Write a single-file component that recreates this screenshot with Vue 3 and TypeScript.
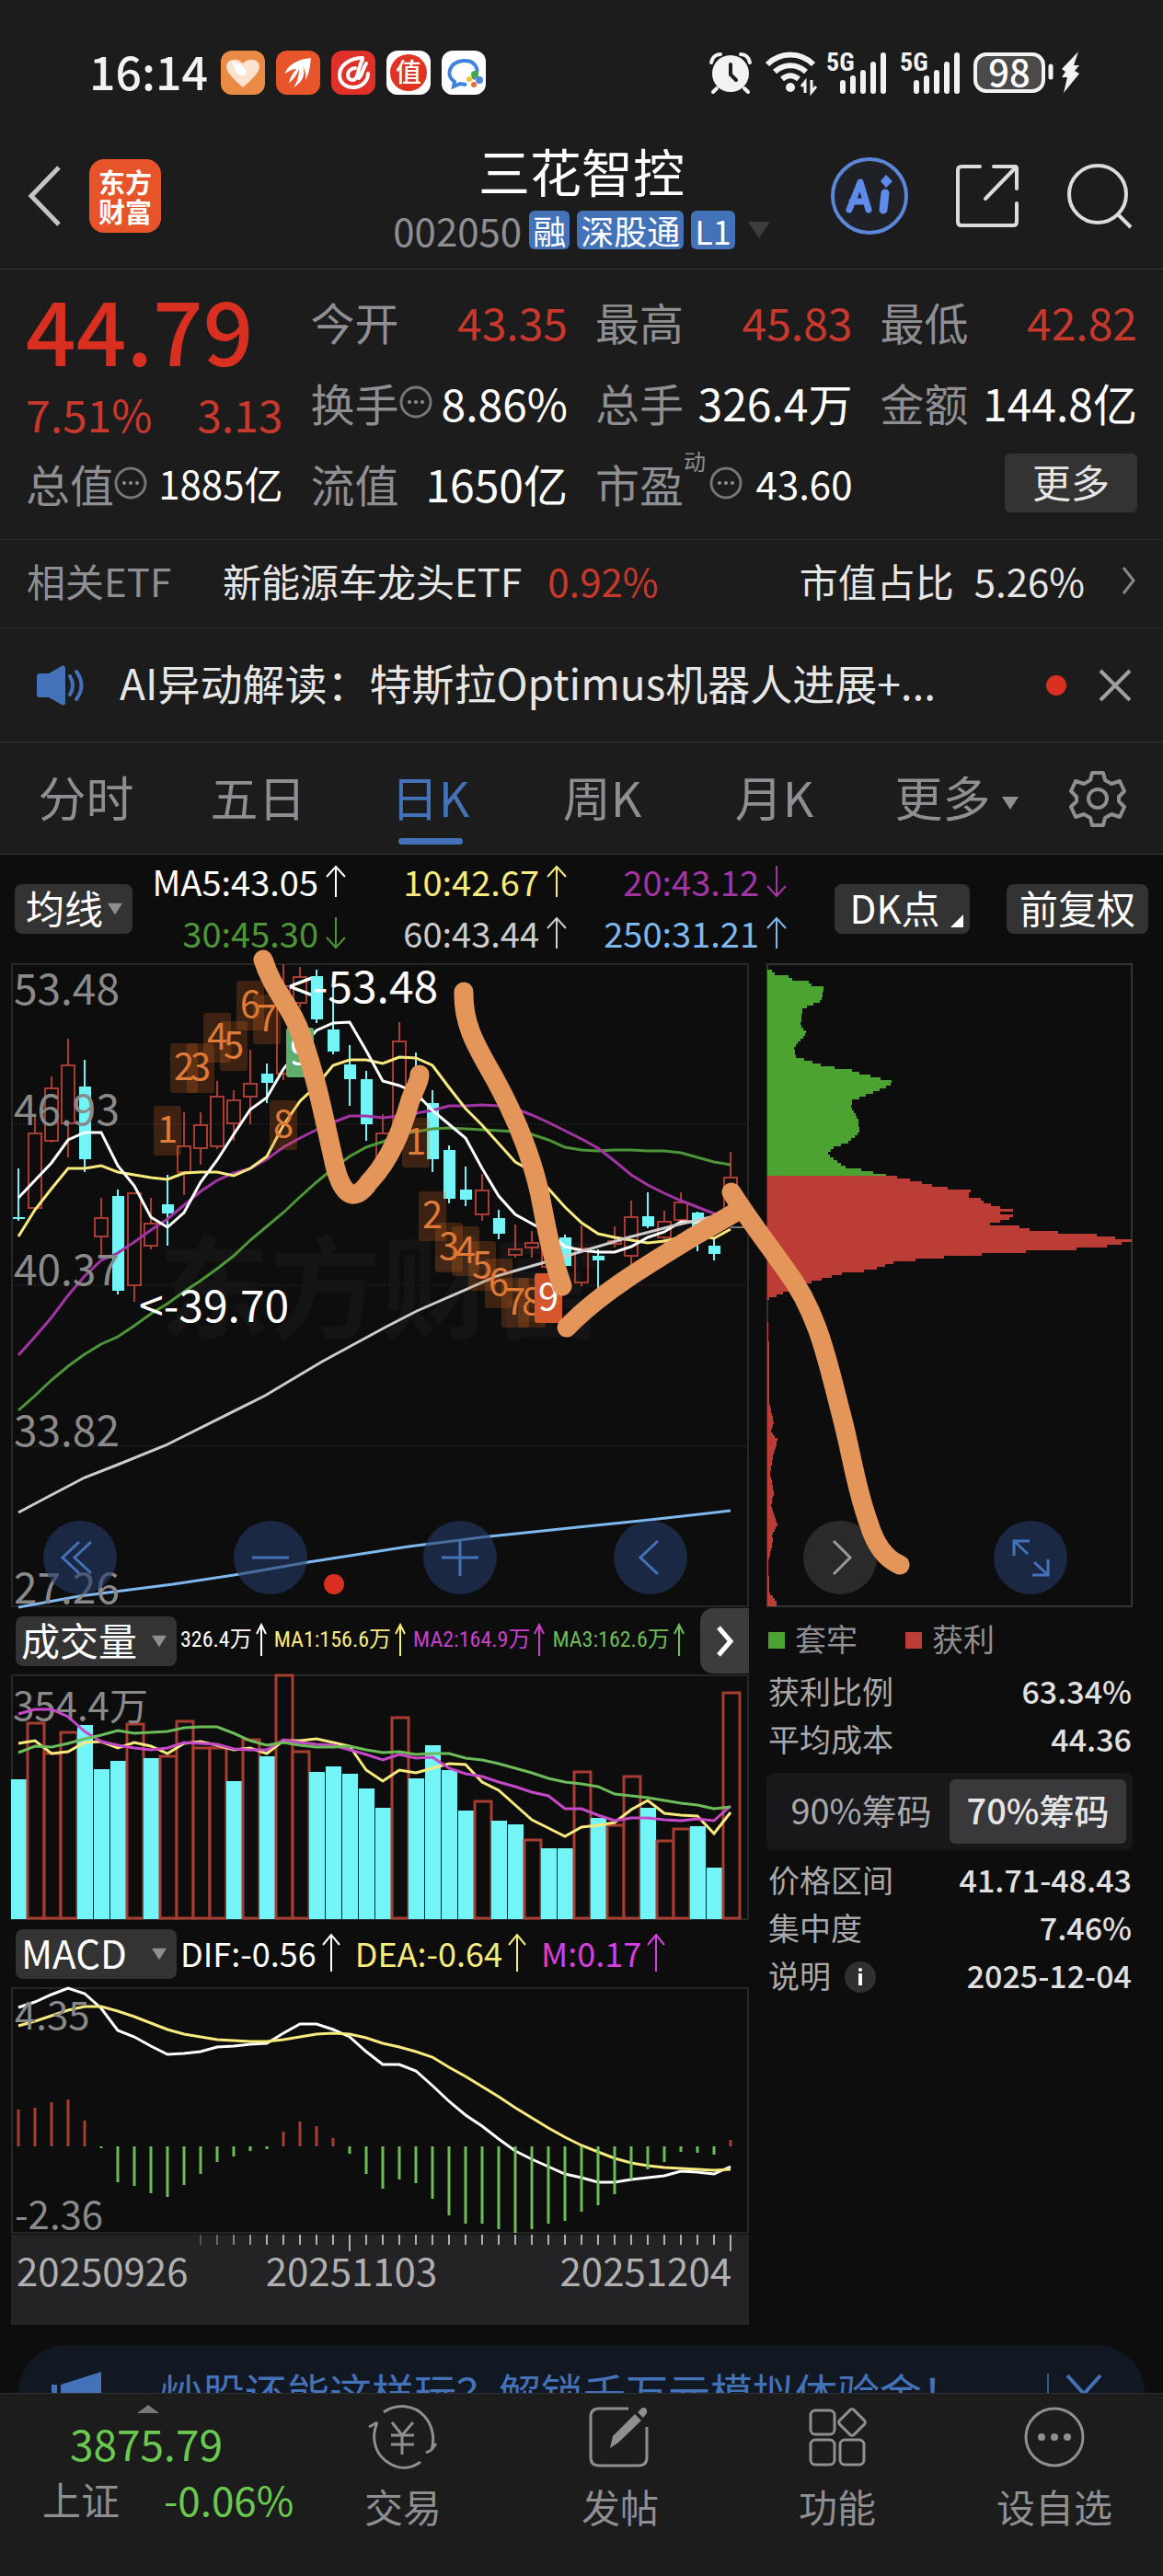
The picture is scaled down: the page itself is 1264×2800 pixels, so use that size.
<script setup lang="ts">
import { ref } from 'vue'

type Kind = 'up' | 'down'
type Candle = [Kind, number, number, number, number]
type Bar = [Kind, number]

const STEP = 18
const FIRST = 8
const xAt = (i: number): number => FIRST + STEP * i

const line = (ys: number[]): string => ys.map((y, i) => `${xAt(i)},${y}`).join(' ')
const scaled = (ys: number[], shift: number): string => line(ys.map((y) => Math.round(y / 3) - shift))

const quotes = [
  { label: '今开', value: '43.35', tone: 'red' },
  { label: '最高', value: '45.83', tone: 'red' },
  { label: '最低', value: '42.82', tone: 'red' },
  { label: '换手', value: '8.86%', info: true },
  { label: '总手', value: '326.4万' },
  { label: '金额', value: '144.8亿' },
  { label: '总值', value: '1885亿', info: true, small: true },
  { label: '流值', value: '1650亿' },
  { label: '市盈', value: '43.60', info: true, small: true, sup: '动' },
]

const tabs = ['分时', '五日', '日K', '周K', '月K', '更多']
const activeTab = ref('日K')
const chip = ref('70%筹码')

const averages = [
  { text: 'MA5:43.05', up: true, color: '#ffffff' },
  { text: '10:42.67', up: true, color: '#f8ea7c' },
  { text: '20:43.12', up: false, color: '#a234a4' },
  { text: '30:45.30', up: false, color: '#4d9638' },
  { text: '60:43.44', up: true, color: '#cccccc' },
  { text: '250:31.21', up: true, color: '#7db8ee' },
]

const candles: Candle[] = [
  ['down', 223, 276, 278, 280], ['up', 164, 184, 266, 266], ['up', 123, 135, 193, 195], ['up', 82, 110, 174, 211],
  ['down', 105, 134, 213, 227], ['up', 255, 276, 297, 317], ['down', 246, 253, 356, 360], ['up', 249, 249, 350, 368],
  ['up', 255, 282, 307, 311], ['down', 230, 262, 272, 307], ['up', 162, 198, 227, 252], ['up', 162, 175, 201, 219],
  ['up', 128, 144, 199, 202], ['up', 138, 148, 174, 193], ['up', 94, 130, 145, 175], ['down', 109, 120, 130, 152],
  ['up', 1, 24, 120, 127], ['up', 4, 14, 43, 48], ['down', 7, 14, 61, 65], ['down', 27, 72, 96, 99],
  ['down', 89, 110, 126, 155], ['down', 117, 126, 175, 193], ['up', 164, 184, 220, 226], ['up', 64, 84, 175, 190],
  ['down', 97, 125, 150, 165], ['down', 138, 152, 213, 227], ['down', 198, 203, 256, 261], ['down', 221, 246, 257, 264],
  ['up', 229, 246, 273, 280], ['down', 268, 277, 294, 300], ['up', 284, 310, 317, 320], ['up', 291, 303, 309, 320],
  ['up', 300, 308, 330, 338], ['down', 295, 298, 329, 329], ['up', 285, 309, 347, 351], ['down', 311, 318, 323, 356],
  ['up', 286, 301, 305, 309], ['up', 258, 275, 318, 333], ['down', 249, 275, 286, 288], ['up', 269, 280, 298, 306],
  ['up', 249, 259, 279, 280], ['down', 270, 271, 293, 313], ['down', 298, 307, 316, 323], ['up', 205, 232, 266, 270],
]

const priceLines = [
  { color: '#4d9638', points: scaled([1479, 1430, 1380, 1335, 1295, 1263, 1240, 1202, 1165, 1130, 1092, 1055, 1017, 975, 925, 880, 833, 782, 735, 690, 650, 622, 603, 580, 570, 562, 559, 562, 563, 566, 570, 580, 597, 621, 630, 634, 629, 631, 632, 633, 640, 653, 670, 678], 7) },
  { color: '#a234a4', points: scaled([1298, 1240, 1175, 1105, 1040, 990, 965, 930, 890, 855, 810, 765, 730, 705, 690, 660, 620, 590, 565, 540, 520, 520, 525, 520, 510, 500, 487, 487, 482, 486, 495, 515, 540, 568, 595, 625, 665, 710, 745, 772, 795, 815, 838, 845], 7) },
  { color: '#f8ea7c', points: scaled([911, 825, 755, 690, 690, 680, 702, 710, 720, 727, 706, 702, 703, 715, 690, 650, 550, 470, 420, 355, 335, 336, 347, 328, 330, 355, 425, 495, 550, 610, 668, 700, 755, 815, 868, 903, 915, 925, 933, 928, 915, 910, 918, 888], 7) },
  { color: '#ffffff', points: scaled([787, 730, 672, 597, 574, 572, 680, 748, 848, 882, 835, 735, 663, 580, 498, 460, 365, 300, 240, 216, 213, 305, 405, 420, 445, 500, 545, 590, 690, 780, 840, 870, 900, 945, 958, 963, 964, 945, 915, 898, 865, 865, 868, 835], 7) },
  { color: '#cccccc', points: '8,597 40,580 80,559 116,545 168,524 276,470 338,433 408,395 441,378 528,340 601,319 671,298 721,285 782,271' },
  { color: '#7db8ee', points: '8,700 74,688 176,675 249,664 323,651 432,634 511,624 616,613 694,605 782,595' },
]

const tags = [
  { n: '1', x: 155, y: 155 }, { n: '2', x: 173, y: 87 }, { n: '3', x: 191, y: 87 }, { n: '4', x: 209, y: 54 },
  { n: '5', x: 227, y: 63 }, { n: '6', x: 245, y: 19 }, { n: '7', x: 263, y: 34 }, { n: '8', x: 281, y: 149 },
  { n: '9', x: 299, y: 70, fill: '#5fae6c' },
  { n: '1', x: 425, y: 168 }, { n: '2', x: 443, y: 248 }, { n: '3', x: 461, y: 282 }, { n: '4', x: 479, y: 286 },
  { n: '5', x: 497, y: 302 }, { n: '6', x: 515, y: 321 }, { n: '7', x: 533, y: 342 }, { n: '8', x: 551, y: 342 },
  { n: '9', x: 569, y: 337, fill: '#d4582c' },
]

const priceLabels = [
  { text: '53.48', y: 45 }, { text: '46.93', y: 176 }, { text: '40.37', y: 350 }, { text: '33.82', y: 525 }, { text: '27.26', y: 696 },
]

// Cost distribution: [offset from top, width of the bar]
const trapped: number[][] = [[4, 0], [9, 5], [15, 23], [21, 45], [26, 61], [39, 59], [48, 38], [66, 36], [75, 42], [90, 29], [100, 31], [109, 58], [116, 92], [127, 135], [131, 134], [139, 115], [148, 92], [155, 91], [169, 99], [182, 100], [194, 87], [198, 73], [206, 65], [221, 85], [224, 102], [228, 115], [231, 129]]
const profit: number[][] = [[231, 141], [235, 155], [238, 168], [243, 196], [248, 221], [251, 216], [257, 232], [265, 253], [267, 267], [270, 253], [275, 267], [283, 238], [287, 274], [291, 316], [294, 338], [296, 358], [299, 378], [301, 396], [307, 363], [310, 322], [313, 260], [318, 192], [323, 140], [332, 113], [336, 81], [344, 51], [348, 40], [357, 17], [364, 0], [383, 0], [392, 1], [425, 2], [475, 2], [498, 7], [507, 4], [517, 11], [535, 6], [553, 3], [574, 7], [588, 4], [609, 11], [620, 5], [627, 6], [650, 1], [682, 2], [693, 10], [699, 9]]

function stairs(rows: number[][], unit: number): string {
  const top = rows[0][0]
  const end = rows[rows.length - 1][0]
  let d = `M1 ${top}`
  for (let y = top; y < end; y += unit) {
    let k = 0
    while (k < rows.length - 2 && rows[k + 1][0] <= y) k++
    const [y0, w0] = rows[k]
    const [y1, w1] = rows[k + 1]
    const level = Math.round(w0 + ((w1 - w0) * (y - y0)) / (y1 - y0))
    const peaks = rows.filter((r) => r[0] >= y && r[0] < y + unit).map((r) => r[1])
    d += `H${1 + Math.max(level, ...peaks)}V${Math.min(y + unit, end)}`
  }
  return `${d}H1Z`
}
const trappedPath = stairs(trapped, 3)
const profitPath = stairs(profit, 3)

const volumes: Bar[] = [
  ['down', 114], ['up', 53], ['up', 86], ['up', 63], ['down', 55], ['down', 103], ['down', 94], ['up', 54], ['down', 91], ['up', 89], ['up', 51],
  ['up', 80], ['up', 80], ['down', 116], ['up', 71], ['down', 89], ['up', 1], ['up', 84], ['down', 106], ['down', 100], ['down', 108], ['down', 124],
  ['down', 145], ['up', 47], ['down', 113], ['down', 77], ['down', 104], ['down', 148], ['up', 138], ['down', 159], ['down', 163], ['up', 180],
  ['down', 189], ['down', 189], ['up', 106], ['down', 156], ['up', 164], ['up', 111], ['down', 145], ['up', 181], ['up', 168], ['down', 165],
  ['down', 210], ['up', 20],
]
const volumeLines = [
  { color: '#f8ea7c', points: scaled([465, 457, 497, 493, 462, 460, 480, 462, 475, 497, 465, 458, 472, 487, 480, 497, 455, 455, 449, 463, 475, 552, 587, 553, 561, 545, 532, 535, 590, 617, 667, 713, 740, 767, 737, 732, 722, 680, 650, 692, 700, 703, 760, 690], 80) },
  { color: '#c648c8', points: scaled([368, 354, 355, 378, 425, 460, 470, 480, 485, 480, 463, 466, 468, 483, 487, 485, 453, 462, 467, 470, 485, 502, 520, 502, 513, 510, 545, 563, 573, 590, 605, 623, 637, 678, 677, 700, 718, 707, 708, 714, 717, 712, 718, 670], 80) },
  { color: '#6cbc59', points: scaled([495, 475, 477, 465, 450, 438, 424, 431, 430, 426, 415, 412, 411, 432, 457, 472, 463, 472, 478, 477, 475, 486, 494, 492, 500, 497, 499, 513, 520, 530, 547, 562, 578, 590, 596, 605, 630, 635, 641, 652, 661, 667, 677, 673], 80) },
]
const volumeStats = [
  { text: '326.4万', color: '#ffffff' },
  { text: 'MA1:156.6万', color: '#f8ea7c' },
  { text: 'MA2:164.9万', color: '#c840c8' },
  { text: 'MA3:162.6万', color: '#6cbc59' },
]

const macdStats = [
  { text: 'DIF:-0.56', color: '#ffffff' },
  { text: 'DEA:-0.64', color: '#f8ea7c' },
  { text: 'M:0.17', color: '#d83ee0' },
]
const ZERO = 173
const histogram = [462, 456, 438, 430, 498, 587, 698, 711, 735, 747, 708, 672, 633, 614, 597, 590, 535, 501, 516, 556, 606, 672, 719, 690, 702, 753, 806, 834, 834, 852, 863, 852, 834, 825, 795, 773, 738, 690, 658, 633, 599, 602, 608, 561].map((y) => Math.round(y / 3) - 21)
const dif = scaled([128, 110, 87, 65, 83, 133, 203, 225, 255, 282, 279, 273, 259, 255, 248, 246, 212, 183, 183, 200, 225, 272, 315, 316, 336, 383, 435, 480, 515, 557, 597, 623, 647, 671, 684, 699, 698, 690, 683, 677, 663, 667, 673, 648], 21)
const dea = scaled([190, 173, 155, 138, 125, 127, 142, 158, 180, 200, 215, 225, 234, 237, 240, 240, 235, 226, 216, 213, 215, 227, 245, 257, 272, 292, 323, 355, 387, 420, 455, 488, 521, 551, 578, 601, 620, 636, 645, 651, 654, 657, 660, 657], 21)
const ticks = Array.from({ length: 33 }, (_, k) => k + 11)

const drawings = [
  'M286 -4 C297 31 318 48 328 80 C345 128 352 168 362 211 C370 253 385 262 401 238 C425 213 437 180 445 152 C449 138 456 130 456 121',
  'M504 31 C503 68 519 92 538 126 C562 170 578 210 587 252 C596 300 601 322 611 351',
  'M616 396 C650 360 700 330 754 297 L804 268',
  'M795 249 C812 276 832 302 854 333 C890 380 900 436 915 493 C926 535 930 570 944 608 C952 635 964 648 978 654',
]
</script>

<template>
  <div class="app">
    <div class="status">
      <span class="clock">16:14</span>
      <div class="apps">
        <svg viewBox="0 0 48 48"><rect width="48" height="48" rx="12" fill="#e98a45" /><path d="M24 40C15 32 7 25 6 18c0-9 12-11 18-4 6-7 18-5 18 4-1 7-9 14-18 22Z" fill="#fbe3d0" /><path d="M12 12c7 0 15 7 16 12-3 6-9 3-12-2Z" fill="#fff" /></svg>
        <svg viewBox="0 0 48 48"><rect width="48" height="48" rx="12" fill="#e8552b" /><path d="M38 8C24 9 12 16 10 25c4-3 8-5 12-5-5 6-7 11-8 15 6-4 9-10 11-15 0 8-2 14-6 20 9-5 14-14 10-23 3 5 4 10 3 15 5-8 5-18 6-24Z" fill="#fff" /></svg>
        <svg viewBox="0 0 48 48"><rect width="48" height="48" rx="12" fill="#df3029" /><g fill="none" stroke="#fff" stroke-width="4" stroke-linecap="round"><path d="M34 8C20 8 9 16 9 27c0 8 7 13 15 13 9 0 16-7 16-15" /><path d="M34 10C28 20 30 32 23 32c-7 0-7-12 3-13M38 14c-4 6-4 12-8 16" /></g></svg>
        <svg viewBox="0 0 48 48"><rect width="48" height="48" rx="12" fill="#fff" /><circle cx="24" cy="24" r="20" fill="#df3423" /><text x="24" y="34" font-size="28" font-weight="500" text-anchor="middle" fill="#fff">值</text></svg>
        <svg viewBox="0 0 48 48"><rect width="48" height="48" rx="12" fill="#fff" /><path d="M34 31C44 20 35 10 23 11 8 13 4 27 14 34l-1 5 7-3 7 1" fill="none" stroke="#3f83e0" stroke-width="4" /><circle cx="36" cy="26" r="4" fill="#47a84c" /><circle cx="41" cy="32" r="4" fill="#4a86dc" /><circle cx="35" cy="37" r="3" fill="#e96a3c" /><circle cx="30" cy="31" r="3" fill="#f2c22e" /></svg>
      </div>
      <div class="signals">
        <svg width="44" height="44" viewBox="0 0 44 44"><circle cx="22" cy="23" r="20" fill="#f2f2f2" /><path d="M22 13v11l6 6" fill="none" stroke="#1c1c1c" stroke-width="4" stroke-linecap="round" /><path d="M1 11Q3 2 11 2M43 11Q41 2 33 2M7 39l-4 4M37 39l4 4" fill="none" stroke="#f2f2f2" stroke-width="4" stroke-linecap="round" /></svg>
        <svg class="wifi" width="58" height="44" viewBox="0 0 58 44"><g fill="none" stroke="#f2f2f2" stroke-width="6"><path d="M2 13C16-1 38-1 52 13" /><path d="M10 21c10-9 24-9 34 0" /><path d="M18 29c6-5 12-5 18 0" /></g><circle cx="27" cy="38" r="5" fill="#f2f2f2" /><path d="M43 44V32l-4 5M50 30v13l5-6" fill="none" stroke="#f2f2f2" stroke-width="3" /></svg>
        <div v-for="n in 2" :key="n" class="cell">
          <svg width="66" height="46" viewBox="0 0 66 46"><text class="net" x="0" y="21">5G</text><path d="M18 34v9M29 29v14M40 23v20M51 14v29M62 4v39" stroke="#f2f2f2" stroke-width="6" stroke-linecap="round" /></svg>
        </div>
        <span class="battery">98</span>
        <svg width="34" height="48" viewBox="0 0 34 48"><path d="M3 17v12" stroke="#f2f2f2" stroke-width="5" stroke-linecap="round" /><path d="M33 1L15 20l4 3-4 6h6l-4 17 17-21-5-3 5-6h-6Z" fill="#f2f2f2" /></svg>
      </div>
    </div>

    <header class="head">
      <div class="head-side">
        <button class="plain" aria-label="返回"><svg width="40" height="68" viewBox="0 0 40 68"><path d="M35 3L5 34l30 31" fill="none" stroke="#c4c4c4" stroke-width="5" /></svg></button>
        <span class="logo">东方<br>财富</span>
      </div>
      <div class="title">
        <h1>三花智控</h1>
        <div class="sub">
          <span class="code">002050</span><span class="badge">融</span><span class="badge">深股通</span><span class="badge">L1</span>
          <svg width="24" height="18" viewBox="0 0 24 18"><path d="M0 0h24L12 18Z" fill="#3d3d3d" /></svg>
        </div>
      </div>
      <div class="head-side right">
        <button class="plain" aria-label="AI"><svg width="84" height="84" viewBox="0 0 84 84"><circle cx="42" cy="42" r="40" fill="#1f2126" stroke="#5c86d8" stroke-width="4" /><path d="M20 57l12-30 9 30M23 48h15" fill="none" stroke="#5f8ceb" stroke-width="7" stroke-linecap="round" stroke-linejoin="round" /><path d="M59 39l-2 18" stroke="#5f8ceb" stroke-width="9" stroke-linecap="round" /><path d="M60 19l7 7-7 7-6-7Z" fill="#5f8ceb" /></svg></button>
        <button class="plain" aria-label="分享"><svg width="70" height="70" viewBox="0 0 70 70"><path d="M27 3H7Q3 3 3 7v56q0 4 4 4h56q4 0 4-4V43M42 3h23q2 0 2 2v22M65 5L33 38" fill="none" stroke="#dcdcdc" stroke-width="4" stroke-linecap="round" /></svg></button>
        <button class="plain" aria-label="搜索"><svg width="72" height="72" viewBox="0 0 72 72"><circle cx="34" cy="34" r="31" fill="none" stroke="#dcdcdc" stroke-width="4" /><path d="M56 56l14 14" stroke="#dcdcdc" stroke-width="4" /></svg></button>
      </div>
    </header>

    <section class="quote">
      <div class="price">
        <strong>44.79</strong>
        <div class="change"><span>7.51%</span><span>3.13</span></div>
      </div>
      <div v-for="q in quotes" :key="q.label" class="item">
        <span class="label">{{ q.label }}<sup v-if="q.sup">{{ q.sup }}</sup></span>
        <svg v-if="q.info" width="36" height="36" viewBox="0 0 36 36"><circle cx="18" cy="18" r="16" fill="none" stroke="#77777b" stroke-width="3" /><g fill="#8e8e93"><circle cx="11" cy="18" r="2" /><circle cx="18" cy="18" r="2" /><circle cx="25" cy="18" r="2" /></g></svg>
        <span class="value" :class="{ red: q.tone, small: q.small }">{{ q.value }}</span>
      </div>
      <button class="more">更多</button>
    </section>

    <section class="etf">
      <span class="muted">相关ETF</span>
      <a href="#">新能源车龙头ETF</a>
      <span class="red">0.92%</span>
      <span class="share">市值占比</span>
      <span class="ratio">5.26%</span>
      <svg width="16" height="30" viewBox="0 0 16 30"><path d="M2 1l11 14L2 29" fill="none" stroke="#85858a" stroke-width="3" /></svg>
    </section>

    <section class="news">
      <svg width="54" height="44" viewBox="0 0 54 44"><path d="M0 12q0-3 3-3h10L27 1q4-2 4 3v36q0 5-4 3L13 35H3q-3 0-3-3Z" fill="#4472b8" /><path d="M36 12q6 10 0 20M43 7q11 15 0 30" fill="none" stroke="#4472b8" stroke-width="4" stroke-linecap="round" /></svg>
      <p>AI异动解读：特斯拉Optimus机器人进展+...</p>
      <i class="dot"></i>
      <button class="plain" aria-label="关闭"><svg width="36" height="36" viewBox="0 0 36 36"><path d="M2 2l32 32M34 2L2 34" stroke="#a0a0a0" stroke-width="4" /></svg></button>
    </section>

    <nav class="tabs">
      <button v-for="t in tabs" :key="t" :class="{ active: t === activeTab }" @click="activeTab = t">
        {{ t }}<svg v-if="t === '更多'" width="18" height="14" viewBox="0 0 18 14"><path d="M0 0h18L9 14Z" fill="#8e8e93" /></svg>
      </button>
      <button class="gear" aria-label="设置"><svg width="62" height="62" viewBox="0 0 62 62"><path d="M25 3h12l2 8 7 4 9-3 5 11-6 6v5l6 6-5 11-9-3-7 4-2 8H25l-2-8-7-4-9 3-5-11 6-6v-5l-6-6 5-11 9 3 7-4Z" fill="none" stroke="#8e8e93" stroke-width="4" stroke-linejoin="round" /><circle cx="31" cy="31" r="10" fill="none" stroke="#8e8e93" stroke-width="4" /></svg></button>
    </nav>

    <main class="board">
      <div class="averages">
        <label class="picker narrow"><select aria-label="均线"><option>均线</option></select><svg width="16" height="14" viewBox="0 0 18 14"><path d="M0 0h18L9 14Z" fill="#8e8e93" /></svg></label>
        <div class="avg-grid">
          <span v-for="a in averages" :key="a.text" :style="{ color: a.color }">{{ a.text }}<svg width="22" height="36" viewBox="0 0 22 36"><path :d="a.up ? 'M11 35V2M1 13L11 2l10 11' : 'M11 1v33M1 23l10 11 10-11'" fill="none" stroke="currentColor" stroke-width="2" /></svg></span>
        </div>
        <button class="tool dk">DK点<svg width="14" height="14" viewBox="0 0 14 14"><path d="M14 0v14H0Z" fill="#fff" /></svg></button>
        <button class="tool">前复权</button>
      </div>

      <div class="stage">
        <svg class="chart" viewBox="0 0 802 700">
          <rect x="1" y="1" width="800" height="698" fill="none" stroke="#262626" stroke-width="2" />
          <path d="M1 175h800M1 350h800M1 525h800" stroke="#303030" stroke-width="1" stroke-dasharray="2 2" />
          <text class="watermark" x="160" y="398">东方财富</text>
          <g v-for="(c, i) in candles" :key="i">
            <template v-if="c[0] === 'down'">
              <path :d="`M${xAt(i)} ${c[1]}V${c[4]}`" stroke="#73f4f6" stroke-width="2" />
              <rect :x="xAt(i) - 6" :y="c[2]" width="13" :height="c[3] - c[2]" fill="#73f4f6" />
            </template>
            <template v-else>
              <path :d="`M${xAt(i)} ${c[1]}V${c[2]}M${xAt(i)} ${c[3]}V${c[4]}`" stroke="#a83c32" stroke-width="2" />
              <rect :x="xAt(i) - 7" :y="c[2] + 1" width="14" :height="c[3] - c[2] - 1" fill="none" stroke="#a83c32" stroke-width="2" />
            </template>
          </g>
          <polyline v-for="l in priceLines" :key="l.color" :points="l.points" fill="none" :stroke="l.color" stroke-width="3" />
          <path d="M782 287h20" stroke="#777" stroke-width="2" />
          <g v-for="(t, i) in tags" :key="i" class="tag">
            <rect :x="t.x" :y="t.y" width="30" height="54" rx="3" :fill="t.fill ?? '#d86a20'" :fill-opacity="t.fill ? 1 : 0.24" />
            <text :x="t.x + 15" :y="t.y + 40" :fill="t.fill ? '#fff' : '#e07b39'">{{ t.n }}</text>
          </g>
          <text v-for="p in priceLabels" :key="p.text" class="scale" x="3" :y="p.y">{{ p.text }}</text>
          <text class="mark" x="301" y="43">&lt;-53.48</text>
          <text class="mark" x="139" y="390">&lt;-39.70</text>
        </svg>
        <svg class="chart" viewBox="0 0 398 700">
          <rect x="1" y="1" width="396" height="698" fill="none" stroke="#333" stroke-width="2" />
          <path :d="trappedPath" fill="#4ca331" />
          <path :d="profitPath" fill="#bc3d36" />
        </svg>
        <div class="float">
          <button aria-label="快退"><svg viewBox="0 0 80 80"><path d="M39 23L21 40l18 17M52 23L34 40l18 17" /></svg></button>
          <button aria-label="缩小"><svg viewBox="0 0 80 80"><path d="M20 40h40" /></svg></button>
          <button aria-label="放大"><svg viewBox="0 0 80 80"><path d="M20 40h40M40 20v40" /></svg></button>
          <button aria-label="后退"><svg viewBox="0 0 80 80"><path d="M48 22L29 40l19 18" /></svg></button>
          <button class="gray" aria-label="前进"><svg viewBox="0 0 80 80"><path d="M33 22l18 18-18 18" /></svg></button>
          <button aria-label="全屏"><svg viewBox="0 0 80 80"><path d="M22 38V22h17M22 22l15 14M59 42v17H42M59 59L44 45" /></svg></button>
          <i class="dot"></i>
        </div>
        <svg class="ink" viewBox="0 0 1264 700"><path v-for="d in drawings" :key="d" :d="d" /></svg>
      </div>

      <div class="lower">
        <div>
          <div class="indicator">
            <label class="picker"><select aria-label="指标一"><option>成交量</option></select><svg width="16" height="14" viewBox="0 0 18 14"><path d="M0 0h18L9 14Z" fill="#8e8e93" /></svg></label>
            <div class="stats compact">
              <span v-for="s in volumeStats" :key="s.text" :style="{ color: s.color }">{{ s.text }}<svg width="12" height="36" viewBox="0 0 12 36"><path d="M6 36V2M1 12L6 2l5 10" fill="none" stroke="currentColor" stroke-width="2" /></svg></span>
            </div>
            <button class="next" aria-label="更多指标"><svg width="24" height="36" viewBox="0 0 24 36"><path d="M5 3l13 15L5 33" fill="none" stroke="#fff" stroke-width="5" /></svg></button>
          </div>
          <svg class="chart" viewBox="0 0 802 267">
            <rect x="1" y="1" width="800" height="265" fill="none" stroke="#262626" stroke-width="2" />
            <template v-for="(v, i) in volumes" :key="i">
              <rect v-if="v[0] === 'down'" :x="xAt(i) - 8" :y="v[1]" width="17" :height="266 - v[1]" fill="#73f4f6" />
              <rect v-else :x="xAt(i) - 8" :y="v[1]" width="18" :height="265 - v[1]" fill="#0d0d0d" stroke="#a83c32" stroke-width="3" />
            </template>
            <text class="scale mid" x="2" y="50">354.4万</text>
            <polyline v-for="l in volumeLines" :key="l.color" :points="l.points" fill="none" :stroke="l.color" stroke-width="3" />
          </svg>
          <div class="indicator">
            <label class="picker"><select aria-label="指标二"><option>MACD</option></select><svg width="16" height="14" viewBox="0 0 18 14"><path d="M0 0h18L9 14Z" fill="#8e8e93" /></svg></label>
            <div class="stats">
              <span v-for="s in macdStats" :key="s.text" :style="{ color: s.color }">{{ s.text }}<svg width="20" height="42" viewBox="0 0 20 42"><path d="M10 42V2M1 13L10 2l9 11" fill="none" stroke="currentColor" stroke-width="2" /></svg></span>
            </div>
          </div>
          <svg class="chart" viewBox="0 0 802 269">
            <rect x="1" y="1" width="800" height="266" fill="none" stroke="#262626" stroke-width="2" />
            <polyline :points="dif" fill="none" stroke="#fff" stroke-width="3" />
            <polyline :points="dea" fill="none" stroke="#f8ea7c" stroke-width="3" />
            <path v-for="(h, i) in histogram" :key="i" :d="`M${xAt(i)} ${ZERO}V${h}`" :stroke="h < ZERO ? '#a83c32' : '#6cbc59'" stroke-width="3" />
            <text class="scale mid" x="4" y="46">4.35</text>
            <text class="scale mid" x="4" y="263">-2.36</text>
          </svg>
          <svg class="chart axis" viewBox="0 0 802 98">
            <path v-for="k in ticks" :key="k" :d="`M${xAt(k)} 0V${k === 20 || k === 43 ? 18 : 11}`" stroke="#b0b0b0" stroke-width="2" :opacity="Math.min(1, (k - 9) / 6)" />
            <text x="6" y="56">20250926</text>
            <text x="370" y="56" text-anchor="middle">20251103</text>
            <text x="783" y="56" text-anchor="end">20251204</text>
          </svg>
        </div>

        <aside class="chips">
          <div class="legend"><i class="green"></i><span>套牢</span><i></i><span>获利</span></div>
          <div class="row"><span>获利比例</span><b>63.34%</b></div>
          <div class="row"><span>平均成本</span><b>44.36</b></div>
          <div class="segment">
            <button v-for="c in ['90%筹码', '70%筹码']" :key="c" :class="{ on: c === chip }" @click="chip = c">{{ c }}</button>
          </div>
          <div class="row"><span>价格区间</span><b>41.71-48.43</b></div>
          <div class="row"><span>集中度</span><b>7.46%</b></div>
          <div class="row"><span>说明</span><svg width="36" height="36" viewBox="0 0 36 36"><circle cx="18" cy="18" r="17" fill="#303030" /><circle cx="18" cy="10" r="2" fill="#fff" /><path d="M18 14v13" stroke="#fff" stroke-width="4" /></svg><b>2025-12-04</b></div>
        </aside>
      </div>

      <div class="promo">
        <svg width="54" height="46" viewBox="0 0 54 46"><path d="M0 14h6v20H0ZM10 14L54 0v46L10 34Z" fill="#4472b8" /></svg>
        <p>炒股还能这样玩？解锁千万元模拟体验金！</p>
        <button class="plain" aria-label="收起"><svg width="60" height="46" viewBox="0 0 60 46"><path d="M1 2v42" stroke="#35588f" stroke-width="2" /><path d="M22 4l18 20L58 4" fill="none" stroke="#4472b8" stroke-width="4" /></svg></button>
      </div>
    </main>

    <footer class="dock">
      <button class="index">
        <svg width="24" height="9" viewBox="0 0 24 9"><path d="M0 9L12 0l12 9Z" fill="#77777b" /></svg>
        <b>3875.79</b>
        <span class="pair"><span>上证</span><em>-0.06%</em></span>
      </button>
      <button><svg width="76" height="70" viewBox="0 0 76 70"><g fill="none" stroke="#8e8e93" stroke-width="3"><path d="M17 8C31-2 50 0 61 12c9 10 12 24 8 37l5-7M69 49l-6 3M1 24l9-5 0 0M10 19C2 38 9 56 24 64c10 6 22 6 33-2" /><path d="M26 19l11 14 12-14M25 33h25M25 43h25M37 33v21" /></g></svg>交易</button>
      <button><svg width="70" height="70" viewBox="0 0 70 70"><path d="M44 4H12Q3 4 3 13v44q0 9 9 9h43q9 0 9-9V24" fill="none" stroke="#8e8e93" stroke-width="3" /><path d="M24 47l3-13 24-24 7 7-25 24ZM54 8l5-5q6-1 5 6l-4 5Z" fill="#8e8e93" /></svg>发帖</button>
      <button><svg width="64" height="70" viewBox="0 0 64 70"><g fill="none" stroke="#8e8e93" stroke-width="3"><rect x="3" y="6" width="26" height="26" rx="5" /><rect x="3" y="38" width="26" height="27" rx="5" /><rect x="35" y="38" width="26" height="27" rx="5" /><rect x="37" y="8" width="22" height="22" rx="3" transform="rotate(45 48 19)" /></g></svg>功能</button>
      <button><svg width="68" height="70" viewBox="0 0 68 70"><circle cx="34" cy="35" r="31" fill="none" stroke="#8e8e93" stroke-width="3" /><g fill="#8e8e93"><circle cx="20" cy="35" r="4" /><circle cx="34" cy="35" r="4" /><circle cx="48" cy="35" r="4" /></g></svg>设自选</button>
    </footer>
  </div>
</template>

<style>
body { margin: 0; background: #1c1c1c; }
</style>

<style scoped>
.app {
  display: flex;
  flex-direction: column;
  height: 100vh;
  overflow: hidden;
  background: #1c1c1c;
  color: #e6e6e6;
  font-family: "Noto Sans CJK SC", "Noto Sans", sans-serif;
  font-size: 42px;
  line-height: 48px;
  white-space: nowrap;
}
button, select { font: inherit; color: inherit; border: 0; padding: 0; margin: 0; background: none; }
svg { flex: none; overflow: visible; }
h1, p { margin: 0; font-weight: 400; }
i, em { font-style: normal; }
.plain svg { display: block; }
.red { color: #c8382c; }
.muted { color: #8e8e93; }
.dot { width: 22px; height: 22px; border-radius: 50%; background: #d92f20; }

.status { display: flex; align-items: center; height: 48px; padding: 55px 91px 47px 97px; flex: none; }
.clock { width: 143px; padding-bottom: 6px; font-size: 50px; font-weight: 500; color: #f2f2f2; }
.apps { display: flex; gap: 12px; }
.apps svg { width: 48px; height: 48px; }
.signals { display: flex; align-items: center; margin-left: auto; }
.wifi { margin: 0 8px 0 16px; }
.cell { display: flex; margin-right: 14px; }
.net { font-family: "Liberation Sans Narrow", "Roboto Condensed", "Noto Sans CJK SC", sans-serif; font-size: 28px; font-weight: 700; fill: #f2f2f2; }
.battery { box-sizing: border-box; width: 78px; height: 44px; margin-right: 3px; border: 4px solid #f2f2f2; border-radius: 14px; background: #4a4a4a; color: #fff; font-size: 40px; font-weight: 500; line-height: 32px; text-align: center; }

.head { display: grid; grid-template-columns: 1fr auto 1fr; align-items: center; height: 142px; border-bottom: 1px solid #383838; flex: none; }
.head-side { display: flex; align-items: center; gap: 28px; padding: 0 33px 16px 29px; }
.right { justify-content: flex-end; gap: 51px; }
.logo { padding: 8px 10px; border-radius: 16px; background: #e8542a; color: #fff; font-size: 29px; font-weight: 700; line-height: 32px; }
h1 { font-size: 56px; line-height: 60px; color: #fff; text-align: center; }
.sub { display: flex; align-items: center; gap: 8px; margin-top: 14px; padding-bottom: 16px; }
.code { font-size: 42px; line-height: 42px; color: #8e8e93; }
.badge { padding: 0 4px; border-radius: 6px; background: #4472b8; color: #fff; font-size: 36px; line-height: 42px; }
.sub svg { margin-left: 6px; }

.quote { display: grid; grid-template-columns: repeat(4, 1fr); grid-auto-rows: 88px; column-gap: 30px; padding: 12px 28px 17px; border-bottom: 1px solid #2c2c2c; flex: none; font-size: 48px; }
.price { grid-row: span 2; padding-top: 4px; }
.price strong { display: block; font-size: 96px; font-weight: 500; line-height: 96px; color: #d92f20; }
.change { display: flex; justify-content: space-between; margin-top: 20px; color: #c8382c; }
.item { display: flex; align-items: center; }
.label { position: relative; color: #8e8e93; }
.label sup { position: absolute; left: 100%; top: -14px; font-size: 24px; line-height: 28px; }
.label:has(sup) + svg { margin-left: 28px; }
.value { margin-left: auto; color: #fff; }
.value.red { color: #c8382c; }
.value.small { font-size: 42px; }
.more { align-self: center; justify-self: end; width: 144px; height: 64px; padding-bottom: 4px; border-radius: 6px; background: #333; color: #e6e6e6; font-size: 42px; }

.etf { display: flex; align-items: center; height: 96px; padding: 0 29px 8px; border-bottom: 1px solid #2c2c2c; flex: none; line-height: 42px; box-sizing: border-box; }
.etf a { margin: 0 28px 0 56px; color: inherit; text-decoration: none; }
.share { margin-left: auto; }
.ratio { margin: 0 40px 0 22px; }

.news { display: flex; align-items: center; height: 123px; padding: 0 34px 0 40px; border-bottom: 1px solid #333; flex: none; font-size: 46px; }
.news p { flex: 1; margin-left: 36px; padding-bottom: 8px; }
.news .dot { margin-right: 35px; }

.tabs { display: grid; grid-template-columns: repeat(6, 1fr) 142px; height: 121px; border-bottom: 1px solid #383838; flex: none; font-size: 52px; color: #8e8e93; }
.tabs button { position: relative; padding-bottom: 4px; }
.tabs button svg { margin-left: 12px; vertical-align: 8px; }
.tabs button:nth-child(6) { padding-left: 22px; }
.tabs .active { color: #4472b8; }
.tabs .active::after { content: ""; position: absolute; left: 50%; bottom: 10px; width: 70px; height: 7px; margin-left: -35px; border-radius: 4px; background: #4472b8; }
.tabs .gear { padding: 0; }
.tabs .gear svg { margin: 0; vertical-align: middle; }

.board { flex: 1; min-height: 0; overflow: hidden; background: #0d0d0d; }
.averages { display: flex; align-items: center; height: 118px; padding: 0 16px; }
.picker { position: relative; display: block; flex: none; width: 175px; }
.picker select { appearance: none; width: 100%; height: 54px; padding: 0 6px 4px; border-radius: 8px; background: #333; color: #fff; line-height: 50px; }
.picker svg { position: absolute; right: 11px; top: 20px; pointer-events: none; }
.narrow { width: 128px; }
.narrow select { padding: 0 12px 4px; }
.avg-grid { display: grid; grid-template-columns: 232fr 240fr 239fr; flex: 1; row-gap: 8px; padding-bottom: 4px; font-size: 38px; }
.avg-grid span { display: flex; align-items: center; justify-content: flex-end; gap: 8px; }
.tool { position: relative; width: 154px; height: 54px; padding-bottom: 4px; border-radius: 8px; background: #333; color: #fff; }
.dk { width: 147px; margin: 0 40px 0 52px; padding-right: 16px; }
.dk svg { position: absolute; right: 7px; bottom: 7px; }

.stage, .lower { display: grid; grid-template-columns: minmax(0, 802fr) minmax(0, 398fr); column-gap: 19px; padding: 0 33px 0 12px; }
.stage { position: relative; }
.lower { align-items: start; }
.chart { display: block; width: 100%; height: auto; }
.watermark { font-size: 121px; font-weight: 700; fill: #141414; }
.scale { font-size: 46px; fill: #8a8a8a; }
.mid { font-size: 42px; }
.mark { font-size: 48px; fill: #fff; }
.tag text { font-size: 40px; text-anchor: middle; }
.float { position: absolute; left: 47px; right: 104px; bottom: 14px; display: flex; justify-content: space-between; }
.float button { width: 80px; height: 80px; border-radius: 50%; background: rgba(35, 59, 104, 0.6); }
.float button svg { display: block; fill: none; stroke: #4472b8; stroke-width: 3; }
.float .gray { background: #2a2a2a; }
.float .gray svg { stroke: #999; }
.float .dot { position: absolute; left: 305px; top: 58px; }
.ink { position: absolute; left: 0; top: 0; width: 100%; height: auto; pointer-events: none; fill: none; stroke: #e4965a; stroke-width: 21; stroke-linecap: round; stroke-linejoin: round; }

.indicator { display: flex; align-items: center; height: 73px; padding-left: 5px; }
.stats { display: flex; flex: 1; gap: 16px; margin-left: 4px; padding-bottom: 4px; font-size: 36px; }
.stats span { display: flex; align-items: center; gap: 6px; }
.compact { gap: 8px; font-family: "Liberation Sans Narrow", "Roboto Condensed", "Noto Sans CJK SC", sans-serif; font-size: 24px; }
.compact span { gap: 4px; }
.next { display: flex; align-items: center; justify-content: center; flex: none; width: 53px; height: 71px; border-radius: 14px 0 0 14px; background: #3c3c3c; }
.axis { background: #232325; font-size: 42px; }
.axis text { fill: #b0b0b0; }

.chips { font-size: 34px; color: #a9a9ab; }
.legend { display: flex; align-items: center; height: 67px; color: #8e8e93; }
.legend i { width: 18px; height: 18px; margin: 4px 11px 0 2px; background: #bc3d36; }
.legend .green { background: #4ca331; }
.legend span { width: 118px; }
.row { display: flex; align-items: center; box-sizing: border-box; height: 52px; padding: 0 1px 4px 2px; }
.row svg { margin: 4px 0 0 14px; }
.row b { margin-left: auto; color: #e0e0e0; font-weight: 500; }
.segment { display: grid; grid-template-columns: 1fr 1fr; height: 70px; margin: 9px 0 8px; padding: 7px; border-radius: 8px; background: #18181a; font-size: 38px; }
.segment button { padding-bottom: 4px; border-radius: 6px; }
.segment .on { background: #39393b; color: #e6e6e6; font-weight: 500; }

.promo { display: flex; align-items: center; height: 104px; margin: 22px 20px 0; padding: 0 46px 0 36px; border-radius: 52px; background: #121821; color: #4472b8; font-size: 46px; }
.promo p { flex: 1; margin-left: 64px; padding-bottom: 4px; }

.dock { display: grid; grid-template-columns: 320fr 236fr 236fr 236fr 236fr; height: 198px; border-top: 1px solid #303030; background: #1c1c1c; color: #8e8e93; flex: none; }
.dock button { display: flex; flex-direction: column; align-items: center; gap: 16px; padding-top: 12px; }
.dock .index { gap: 8px; padding-left: 46px; align-items: stretch; }
.index svg { margin-left: 103px; }
.index b { margin-left: 30px; font-size: 46px; font-weight: 400; color: #6ac94f; text-align: left; }
.pair { display: flex; gap: 48px; margin-top: 5px; }
.pair em { color: #6ac94f; font-size: 44px; }
</style>
